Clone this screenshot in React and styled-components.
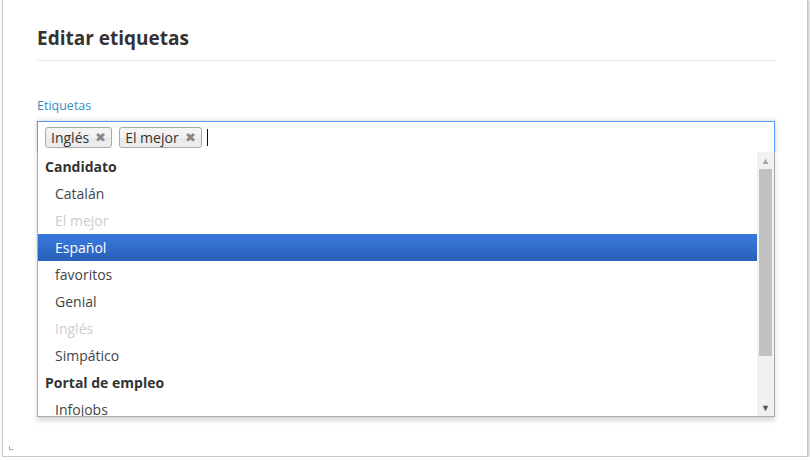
import React, { useState } from "react";
import styled, { createGlobalStyle } from "styled-components";

const groups = [
  {
    name: "Candidato",
    options: [
      { label: "Catalán" },
      { label: "El mejor", disabled: true },
      { label: "Español", active: true },
      { label: "favoritos" },
      { label: "Genial" },
      { label: "Inglés", disabled: true },
      { label: "Simpático" },
    ],
  },
  {
    name: "Portal de empleo",
    options: [{ label: "Infojobs" }],
  },
];

const GlobalStyle = createGlobalStyle`
  body {
    margin: 0;
    background: #fff;
    font-family: "Open Sans", "Liberation Sans", sans-serif;
    color: #333;
  }
`;

export default function App() {
  const [chips, setChips] = useState(["Inglés", "El mejor"]);

  return (
    <>
      <GlobalStyle />
      <Dialog>
        <Title>Editar etiquetas</Title>
        <Field>
          <Label>Etiquetas</Label>
          <Select>
            <Choices>
              {chips.map((chip) => (
                <Chip key={chip}>
                  {chip}
                  <Close onClick={() => setChips(chips.filter((c) => c !== chip))}>✖</Close>
                </Chip>
              ))}
              <Caret />
            </Choices>
            <Drop>
              <Results>
                {groups.map((group) => (
                  <React.Fragment key={group.name}>
                    <GroupName>{group.name}</GroupName>
                    {group.options.map((opt) => (
                      <Option key={opt.label} $disabled={opt.disabled} $active={opt.active}>
                        {opt.label}
                      </Option>
                    ))}
                  </React.Fragment>
                ))}
              </Results>
              <Scrollbar>
                <Arrow>▲</Arrow>
                <Track>
                  <Thumb />
                </Track>
                <Arrow $down>▼</Arrow>
              </Scrollbar>
            </Drop>
          </Select>
        </Field>
        <Grip />
      </Dialog>
    </>
  );
}

const Dialog = styled.div`
  position: relative;
  box-sizing: border-box;
  width: 806px;
  height: 458px;
  margin: -1px 0 0 2px;
  padding: 28px 32px 0 34px;
  background: #fff;
  border: 1px solid #c8c8c8;
  box-shadow: 1px 1px 3px rgba(0, 0, 0, 0.25);
`;

const Title = styled.h2`
  margin: 0;
  padding-bottom: 12px;
  font-size: 19px;
  font-weight: 700;
  line-height: 20px;
  color: #333;
  border-bottom: 1px solid #e8e8e8;
`;

const Field = styled.div`
  padding-top: 36px;
`;

const Label = styled.div`
  font-size: 12.5px;
  line-height: 17px;
  color: #3a8cc0;
  margin-bottom: 7px;
`;

const Select = styled.div`
  position: relative;
`;

const Choices = styled.div`
  box-sizing: border-box;
  display: flex;
  align-items: center;
  gap: 7px;
  height: 32px;
  padding: 0 7px 0;
  border: 1px solid #5897fb;
  background: #fff;
  box-shadow: 0 0 5px rgba(0, 0, 0, 0.2);
`;

const Chip = styled.span`
  display: inline-flex;
  align-items: center;
  gap: 6px;
  height: 21px;
  box-sizing: border-box;
  padding: 0 5px 0 5px;
  font-size: 14px;
  color: #333;
  border: 1px solid #aaa;
  border-radius: 3px;
  background: linear-gradient(#f4f4f4 20%, #f0f0f0 50%, #e8e8e8 52%, #eee);
`;

const Close = styled.span`
  font-size: 13px;
  line-height: 1;
  color: #888;
  cursor: pointer;
`;

const Caret = styled.span`
  width: 1px;
  height: 17px;
  margin-left: -2px;
  background: #111;
`;

const Drop = styled.div`
  position: absolute;
  top: 31px;
  left: 0;
  right: 0;
  height: 265px;
  display: flex;
  box-sizing: border-box;
  border: 1px solid #aaa;
  border-top: 0;
  background: #fff;
  box-shadow: 0 4px 5px rgba(0, 0, 0, 0.15);
  overflow: hidden;
`;

const Results = styled.ul`
  flex: 1;
  margin: 0;
  padding: 1px 0 0;
  list-style: none;
  font-size: 14px;
`;

const GroupName = styled.li`
  padding: 0 7px;
  line-height: 27px;
  font-weight: 700;
  color: #333;
`;

const Option = styled.li`
  padding: 0 17px;
  line-height: 27px;
  color: ${(p) => (p.$disabled ? "#ccc" : p.$active ? "#fff" : "#444")};
  background: ${(p) => (p.$active ? "linear-gradient(#3875d7 20%, #2a62bc 90%)" : "transparent")};
`;

const Scrollbar = styled.div`
  width: 17px;
  display: flex;
  flex-direction: column;
  background: #f1f1f1;
`;

const Arrow = styled.div`
  height: 17px;
  font-size: 9px;
  line-height: 17px;
  text-align: center;
  color: ${(p) => (p.$down ? "#505050" : "#a3a3a3")};
`;

const Track = styled.div`
  flex: 1;
  padding: 0 2px;
`;

const Thumb = styled.div`
  height: 187px;
  background: #c1c1c1;
`;

const Grip = styled.div`
  position: absolute;
  left: 6px;
  bottom: 6px;
  width: 3px;
  height: 3px;
  border-left: 1px solid #aaa;
  border-bottom: 1px solid #aaa;
`;
